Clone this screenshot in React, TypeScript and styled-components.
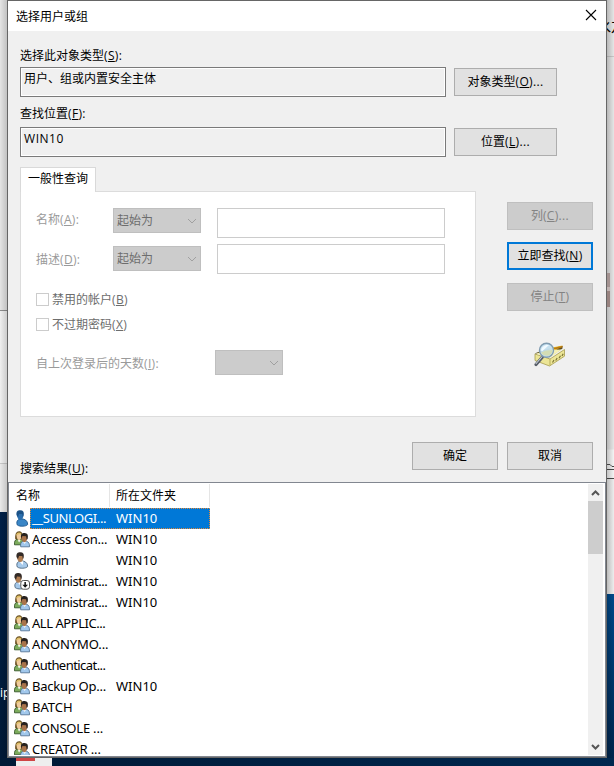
import React from "react";
import styled, { createGlobalStyle, css } from "styled-components";

const Global = createGlobalStyle`
  * { box-sizing: border-box; }
  html, body { margin: 0; padding: 0; overflow: hidden; }
  body { font: 12px/16px "Open Sans", "Noto Sans CJK SC", sans-serif; color: #000; }
  u { text-underline-offset: 1px; text-decoration-thickness: 1px; text-decoration-skip-ink: none; }
`;

const Desktop = styled.div`
  width: 614px;
  height: 766px;
  display: grid;
  grid-template-columns: 7px 600px 7px;
  grid-template-rows: 758px 8px;
  overflow: hidden;
  background: #001d3d;
`;

const LeftStrip = styled.div`
  background: linear-gradient(90deg, transparent, rgba(0, 0, 0, 0.15)),
    linear-gradient(#e4e4e4 310px, #8e8e8e 310px 311px, #f0f0f0 311px 463px, #c8c8c8 463px 464px, #e9e9e9 464px 512px, #002048 512px, #001a38);
  display: flex;
  align-items: flex-end;
  overflow: hidden;
  white-space: nowrap;
  color: #fff;
  padding-bottom: 57px;
`;

const RightStrip = styled.div`
  background: linear-gradient(90deg, rgba(0, 0, 0, 0.2), transparent),
    linear-gradient(#e6e6e6 56px, #c8c8c8 56px 57px, #e6e6e6 57px 449px, #f4f4f4 450px 469px, #4a4a4a 469px 470px, #f4f4f4 470px 478px, #4a4a4a 478px 479px, #ededed 479px 594px, #004a8c 594px, #00264f);
  overflow: hidden;
  white-space: nowrap;
  padding-top: 16px;
`;

const Fragment = styled.div`
  height: 20px;
  font-size: 15px;
  line-height: 20px;
  text-indent: -11px;
  overflow: hidden;
`;

const Avatar = styled.div`
  width: 3px;
  height: 34px;
  margin-top: 237px;
  background: linear-gradient(#a39290 14px, #c0b3b1 14px 18px, #98827f 18px);
`;

const Scribble = styled.svg`
  display: block;
  margin-top: 156px;
`;

const Taskbar = styled.div`
  grid-column: 1 / -1;
  background: linear-gradient(90deg, #001a36, #00274f);
  padding-left: 16px;
`;

const FileIcon = styled.div`
  width: 36px;
  height: 8px;
  background: linear-gradient(90deg, #cf4545 19px, transparent 19px) 0 0 / 100% 3px no-repeat, #eee;
`;

const Dialog = styled.section`
  display: flex;
  flex-direction: column;
  border: 1px solid #666;
  background: #f0f0f0;
`;

const TitleBar = styled.header`
  height: 30px;
  background: #fff;
  display: flex;
  justify-content: space-between;
  align-items: center;
  padding: 1px 9px 0 8px;
  & > svg { margin-bottom: 3px; }
`;

const Body = styled.div`
  height: 451px;
  padding-left: 12px;
`;

const Text = styled.span<{ $spacing?: number }>`
  display: inline-block;
  white-space: nowrap;
  letter-spacing: ${(p) => p.$spacing ?? 0}px;
`;

const AccessKey = styled.span`
  letter-spacing: 0.35px;
`;

const FieldLabel = styled.div<{ $top: number; $h: number }>`
  height: ${(p) => p.$h}px;
  padding-top: ${(p) => p.$top}px;
`;

const FieldRow = styled.div`
  height: 30px;
  display: flex;
  align-items: center;
  gap: 8px;
`;

const ReadOnlyField = styled.div`
  width: 426px;
  height: 30px;
  border: 1px solid #7a7a7a;
  box-shadow: inset 0 0 0 1px #fff;
  padding: 3px 3px;
`;

const Button = styled.button<{ $w?: number; $primary?: boolean }>`
  width: ${(p) => p.$w ?? 86}px;
  height: 28px;
  flex: none;
  padding: 0 0 1px;
  font: inherit;
  color: #000;
  border: 1px solid #adadad;
  border-radius: 0;
  background: #e1e1e1;
  ${(p) => p.$primary && css`border: 2px solid #0078d7;`}
  &:disabled { color: #838383; background: #ccc; border-color: #bfbfbf; }
`;

const QueryArea = styled.div`
  height: 260px;
  padding-top: 10px;
  display: flex;
`;

const TabSet = styled.div`
  width: 456px;
  display: flex;
  flex-direction: column;
`;

const Tab = styled.div`
  width: 76px;
  height: 25px;
  margin-bottom: -1px;
  z-index: 1;
  border: 1px solid #d9d9d9;
  border-bottom: 0;
  background: #fff;
  padding: 3px 7px;
  white-space: nowrap;
`;

const TabPanel = styled.div`
  height: 226px;
  border: 1px solid #dcdcdc;
  background: #fff;
  padding: 16px 0 0 15px;
  color: #9a9a9a;
`;

const FilterRow = styled.div<{ $shift: number }>`
  height: 30px;
  margin-bottom: 6px;
  display: grid;
  grid-template-columns: 77px 104px 228px;
  & > span { padding-top: ${(p) => p.$shift}px; }
`;

const Select = styled.div<{ $w: number; $top?: number }>`
  width: ${(p) => p.$w}px;
  height: 25px;
  margin-top: ${(p) => p.$top ?? 0}px;
  border: 1px solid #bfbfbf;
  background: #ccc;
  color: #6d6d6d;
  display: flex;
  align-items: center;
  justify-content: space-between;
  padding: 0 3px 0 3px;
`;

const TextInput = styled.input`
  width: 228px;
  height: 30px;
  border: 1px solid #ccc;
  background: #fff;
  padding: 0 4px;
`;

const CheckRow = styled.label`
  height: 25px;
  display: flex;
  align-items: center;
  gap: 3px;
  color: #6d6d6d;
`;

const CheckBox = styled.span`
  width: 13px;
  height: 13px;
  border: 1px solid #ccc;
`;

const Checks = styled.div`
  padding-top: 7px;
`;

const DaysRow = styled.div`
  margin-top: 13px;
  display: grid;
  grid-template-columns: 179px 68px;
  align-items: center;
  & > span { padding-top: 2px; }
`;

const SideButtons = styled.div`
  width: 86px;
  margin: 35px 0 0 31px;
  display: flex;
  flex-direction: column;
  align-items: center;
  gap: 12px;
  & > button:nth-child(3) { margin-top: 1px; }
  & > svg { margin-top: 19px; }
`;

const Footer = styled.div`
  padding-top: 25px;
  display: flex;
  gap: 9px;
`;

const ResultLabel = styled.div`
  width: 383px;
  padding-top: 19px;
`;

const ResultList = styled.div`
  height: 275px;
  border: 1px solid #828790;
  background: #fff;
  padding: 1px 2px 1px 1px;
  display: flex;
  justify-content: space-between;
`;

const Rows = styled.div`
  width: 200px;
  overflow: hidden;
`;

const HeaderRow = styled.div`
  height: 24px;
  display: grid;
  grid-template-columns: 100px 100px;
  & > div { border-right: 1px solid #e5e5e5; height: 23px; padding: 4px 6px; }
`;

const Row = styled.div`
  height: 21px;
  display: flex;
  align-items: center;
  padding-left: 4px;
  font: 13px/19px "Noto Sans", "Noto Sans CJK SC", sans-serif;
`;

const Cells = styled.div<{ $selected?: boolean }>`
  width: 180px;
  height: 21px;
  display: grid;
  grid-template-columns: 84px 96px;
  align-items: center;
  padding-left: 2px;
  white-space: pre;
  ${(p) => p.$selected && css`
    background: #0078d7;
    color: #fff;
    outline: 1px dotted #e08a3c;
    outline-offset: -1px;
  `}
`;

const ScrollBar = styled.div`
  width: 15px;
  height: 271px;
  background: #f0f0f0;
  display: flex;
  flex-direction: column;
  align-items: center;
`;

const ScrollButton = styled.div`
  height: 17px;
  display: flex;
  align-items: center;
`;

const Thumb = styled.div`
  width: 15px;
  height: 53px;
  background: #cdcdcd;
  margin-bottom: auto;
`;

const Chevron = () => (
  <svg width="10" height="8" viewBox="0 0 10 8" fill="none" stroke="#a0a0a0">
    <path d="M1 2l4 4 4-4" />
  </svg>
);

const ScrollArrow = ({ up }: { up?: boolean }) => (
  <svg width="9" height="8" viewBox="0 0 9 8" fill="none" stroke="#555" strokeWidth="2">
    <path d={up ? "M1 6l3.5-3.5L8 6" : "M1 2l3.5 3.5L8 2"} />
  </svg>
);

const CloseIcon = () => (
  <svg width="12" height="12" viewBox="0 0 12 12" stroke="#000" strokeWidth="1.1">
    <path d="M1 1l10 10M11 1L1 11" />
  </svg>
);

const Man = ({ blue }: { blue?: boolean }) => (
  <>
    <path d="M3.300 15c-.9-2-.5-4.400 1-5.200L7 8.700l3 .6c2.400.8 3.800 2.900 3.600 5.300-1.600 1.900-7.700 2.300-10.300.4z" fill={blue ? "#3a86c6" : "#a6c9ea"} stroke={blue ? "#1c568c" : "#4d6880"} strokeWidth=".9" />
    {!blue && <path d="M5.500 9.500l3.200 3.500.6-3.800z" fill="#fff" />}
    <path d="M2.900 4.200C3.200 1 8.600.8 9.200 4c.4 2.900-.6 6-2.700 6S2.700 7 2.900 4.200z" fill={blue ? "#2b6fae" : "#b07d52"} />
    <path d="M2.600 5.200C1.800 1.500 4 .2 6.300.3c2.800 0 4 1.700 3.400 5L8.900 7.200 8.300 4 5 3.900 4 7z" fill={blue ? "#1b5287" : "#332b27"} />
  </>
);

const UserIcon = ({ kind }: { kind: string }) => (
  <svg width="16" height="17" viewBox="0 0 16 17">
    {kind === "group" ? (
      <>
        <path d="M.5 13.800c-.3-3 .5-5 2.500-5.500h4.500c1.700 1 1.900 3 1.700 5.500z" fill="#7bab5b" stroke="#35562a" strokeWidth=".9" />
        <path d="M1.200 8.300C.8 3 2.200.3 5 .3s4.300 2.500 3.800 8z" fill="#6e5426" />
        <path d="M2.600 4C3.200 2 7 2 7.300 4.200c.2 2.500-.7 5-2.200 5S2.400 6.500 2.600 4z" fill="#efcb9c" />
        <path d="M2.200 4.600C2 .9 7.300.6 7.700 3.800L5.200 3z" fill="#dfc067" />
        <path d="M3.800 9.300l1.300 2.200L6.600 9z" fill="#fff" />
        <path d="M6.700 15.800c-.4-3 .3-5 2-5.500h4c2.200.8 2.900 2.500 2.800 5.500z" fill="#a2c8ec" stroke="#47688a" strokeWidth=".8" />
        <path d="M8.800 10.300l2 2.600 1.300-2.600z" fill="#fff" />
        <path d="M7.500 6c.3-3.500 5.300-3.500 5.700 0 .2 2.700-.9 5.200-2.800 5.200S7.300 8.500 7.500 6z" fill="#a8734a" />
        <path d="M7.200 7.400C6.200 3.500 8 2 10.600 2.100c3 .1 3.900 2.200 3 5.800l-.9.800-.6-3.400-3.600-.2z" fill="#27221f" />
      </>
    ) : (
      <g transform={kind === "down" ? "translate(-2 -.3)" : undefined}>
        <Man blue={kind === "blue"} />
      </g>
    )}
    {kind === "down" && (
      <>
        <rect x="6.800" y="7.500" width="8.700" height="8.700" rx="2.500" fill="#fff" stroke="#555" />
        <path d="M11.150 9v4" fill="none" stroke="#111" strokeWidth="1.500" />
        <path d="M8.300 11.800h5.700l-2.850 3z" fill="#111" />
      </>
    )}
  </svg>
);

const SearchBookIcon = () => (
  <svg width="34" height="26" viewBox="0 0 34 26">
    <path d="M1.500 11.500l9-3.500 19-4v2.500l-9 6z" fill="#5d4f20" />
    <path d="M14 6.500L29.500 3.500 21 9.500z" fill="#f0bd28" />
    <path d="M20 6l10-2.300-1 1.800-7 2z" fill="#b87a12" />
    <path d="M2 12l15 5 14.500-9.500v6.700L16.500 24 2 18.500z" fill="#ece596" stroke="#a69c4d" strokeWidth=".8" />
    <path d="M3 11.800L14 8l14.500-.5L17 15.800z" fill="#f5f0b4" />
    <path d="M17 17v6.500" stroke="#b7ad5d" />
    <path d="M19.500 20.500l1.500-2.500M22.700 18.500l1.500-2.500M26 16.300l1.500-2.500M29 14l1.200-2.300" stroke="#7b7334" strokeWidth="1.200" />
    <path d="M3 22.500l6.500-7.500" stroke="#555b65" strokeWidth="3.200" strokeLinecap="round" />
    <path d="M2.700 22l6.500-7.500" stroke="#c8d0d8" strokeWidth="1.100" />
    <circle cx="13.500" cy="8.300" r="7" fill="#c3dff0" fillOpacity=".95" stroke="#7f9bb0" strokeWidth="1.400" />
    <path d="M8 10.500l5-2 6.500-.5c0 4-3 5.800-5.500 5.800-2.500 0-5-1-6-3.300z" fill="#d3dcb4" />
    <path d="M8 8.500C8.500 4.500 12 2.500 16 3L9.500 9z" fill="#f1faff" />
  </svg>
);

const Keyed = ({ text, k, end = "" }: { text: string; k: string; end?: string }) => (
  <Text>{text}<AccessKey>(<u>{k}</u>){end}</AccessKey></Text>
);

const results = [
  { icon: "blue", name: "__SUNLOGI...", folder: "WIN10", spacing: -0.42 },
  { icon: "group", name: "Access Con...", folder: "WIN10", spacing: -0.25 },
  { icon: "user", name: "admin", folder: "WIN10", spacing: -0.5 },
  { icon: "down", name: "Administrat...", folder: "WIN10", spacing: -0.45 },
  { icon: "group", name: "Administrat...", folder: "WIN10", spacing: -0.45 },
  { icon: "group", name: "ALL APPLIC...", folder: "", spacing: -0.45 },
  { icon: "group", name: "ANONYMO...", folder: "", spacing: -0.1 },
  { icon: "group", name: "Authenticat...", folder: "", spacing: -0.55 },
  { icon: "group", name: "Backup Op...", folder: "WIN10", spacing: -0.25 },
  { icon: "group", name: "BATCH", folder: "", spacing: 0 },
  { icon: "group", name: "CONSOLE ...", folder: "", spacing: -0.2 },
  { icon: "group", name: "CREATOR ...", folder: "", spacing: -0.1 },
];

export default function App() {
  return (
    <Desktop>
      <Global />
      <LeftStrip>ip</LeftStrip>
      <Dialog>
        <TitleBar>
          <Text>选择用户或组</Text>
          <CloseIcon />
        </TitleBar>
        <Body>
          <FieldLabel $top={17} $h={36}><Keyed text="选择此对象类型" k="S" end=":" /></FieldLabel>
          <FieldRow>
            <ReadOnlyField>用户、组或内置安全主体</ReadOnlyField>
            <Button $w={103}><Keyed text="对象类型" k="O" end="..." /></Button>
          </FieldRow>
          <FieldLabel $top={9} $h={30}><Keyed text="查找位置" k="F" end=":" /></FieldLabel>
          <FieldRow>
            <ReadOnlyField><Text $spacing={0.55}>WIN10</Text></ReadOnlyField>
            <Button $w={103}><Keyed text="位置" k="L" end="..." /></Button>
          </FieldRow>
          <QueryArea>
            <TabSet>
              <Tab>一般性查询</Tab>
              <TabPanel>
                <FilterRow $shift={4}>
                  <Keyed text="名称" k="A" end=":" />
                  <Select $w={88}>起始为<Chevron /></Select>
                  <TextInput disabled />
                </FilterRow>
                <FilterRow $shift={8}>
                  <Keyed text="描述" k="D" end=":" />
                  <Select $w={88} $top={2}>起始为<Chevron /></Select>
                  <TextInput disabled />
                </FilterRow>
                <Checks>
                  <CheckRow><CheckBox /><Keyed text="禁用的帐户" k="B" /></CheckRow>
                  <CheckRow><CheckBox /><Keyed text="不过期密码" k="X" /></CheckRow>
                </Checks>
                <DaysRow>
                  <Keyed text="自上次登录后的天数" k="I" end=":" />
                  <Select $w={68}><span /><Chevron /></Select>
                </DaysRow>
              </TabPanel>
            </TabSet>
            <SideButtons>
              <Button disabled><Keyed text="列" k="C" end="..." /></Button>
              <Button $primary><Keyed text="立即查找" k="N" /></Button>
              <Button disabled><Keyed text="停止" k="T" /></Button>
              <SearchBookIcon />
            </SideButtons>
          </QueryArea>
          <Footer>
            <ResultLabel><Keyed text="搜索结果" k="U" end=":" /></ResultLabel>
            <Button>确定</Button>
            <Button>取消</Button>
          </Footer>
        </Body>
        <ResultList>
          <Rows>
            <HeaderRow><div>名称</div><div>所在文件夹</div></HeaderRow>
            {results.map((r, i) => (
              <Row key={i}>
                <UserIcon kind={r.icon} />
                <Cells $selected={i === 0}>
                  <Text $spacing={r.spacing}>{r.name}</Text>
                  <span>{r.folder}</span>
                </Cells>
              </Row>
            ))}
          </Rows>
          <ScrollBar>
            <ScrollButton><ScrollArrow up /></ScrollButton>
            <Thumb />
            <ScrollButton><ScrollArrow /></ScrollButton>
          </ScrollBar>
        </ResultList>
      </Dialog>
      <RightStrip>
        <Fragment>水友</Fragment>
        <Avatar />
        <Scribble width="7" height="5" viewBox="0 0 7 5" fill="none" stroke="#444">
          <path d="M0 1.500h3l2 2h2" />
        </Scribble>
      </RightStrip>
      <Taskbar><FileIcon /></Taskbar>
    </Desktop>
  );
}
